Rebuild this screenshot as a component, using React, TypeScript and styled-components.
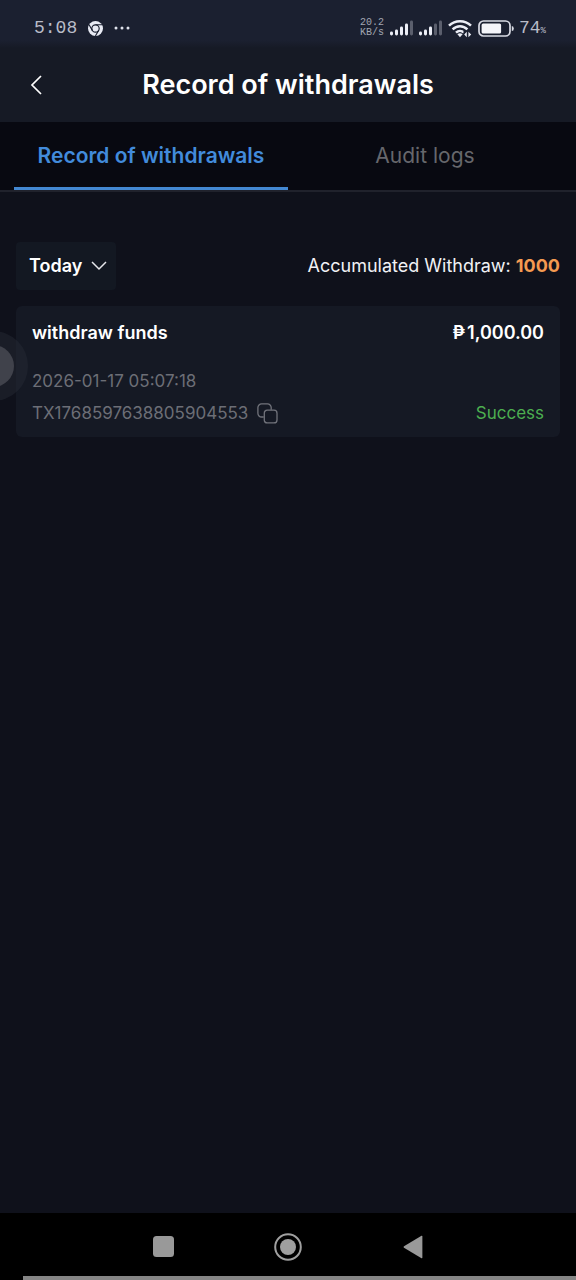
import React from 'react';
import styled, { createGlobalStyle, css } from 'styled-components';

const GlobalStyle = createGlobalStyle`
  *, *::before, *::after { box-sizing: border-box; }
  body {
    margin: 0;
    background: #0f111b;
    color: #ffffff;
    font-family: Inter, "Open Sans", sans-serif;
    font-size: 18px;
    line-height: 24px;
  }
  button { font: inherit; color: inherit; border: 0; padding: 0; background: none; cursor: pointer; }
  h1, h2, p { margin: 0; }
  svg { display: block; flex: none; }
`;

const Screen = styled.div`
  position: relative;
  display: flex;
  flex-direction: column;
  min-height: 100vh;
  overflow: hidden;
`;

const StatusBar = styled.div`
  display: flex;
  align-items: center;
  justify-content: space-between;
  height: 48px;
  padding: 8px 30px 0 34px;
  background: linear-gradient(#1b2030 84%, #161a25);
  color: #d5d8e2;
  font-family: "Liberation Mono", monospace;
`;

const StatusGroup = styled.div<{ $gap: number }>`
  display: flex;
  align-items: center;
  gap: ${({ $gap }) => $gap}px;
`;

const StatusText = styled.span`
  display: flex;
  align-items: baseline;
  font-size: 18px;
  color: #b9bcc8;
`;

const Percent = styled.small`
  font-size: 9px;
  line-height: 9px;
`;

const Speed = styled.span`
  display: grid;
  font-size: 10px;
  line-height: 10px;
  color: #a2a6b2;
`;

const Header = styled.header`
  display: grid;
  grid-template-columns: 48px 1fr 48px;
  align-items: center;
  height: 74px;
  padding: 0 12px;
  background: #161a25;
`;

const BackButton = styled.button`
  display: grid;
  place-items: center;
  height: 48px;
`;

const Title = styled.h1`
  font-size: 27px;
  line-height: 36px;
  font-weight: 600;
  text-align: center;
  white-space: nowrap;
`;

const Tabs = styled.div`
  display: grid;
  grid-template-columns: 1fr 1fr;
  height: 70px;
  padding: 0 14px;
  background: #080911;
  border-bottom: 2px solid #20222c;
`;

const Tab = styled.button<{ $active?: boolean }>`
  height: 68px;
  padding-top: 3px;
  border-bottom: 3px solid transparent;
  font-size: 21px;
  color: #66676c;
  white-space: nowrap;
  ${({ $active }) =>
    $active &&
    css`
      color: #428bdb;
      font-weight: 600;
      border-color: #4388d2;
    `}
`;

const Content = styled.main`
  flex: 1;
  padding: 50px 16px 24px;
`;

const Filters = styled.div`
  display: flex;
  align-items: center;
  justify-content: space-between;
  margin-bottom: 16px;
`;

const PeriodButton = styled.button`
  display: flex;
  align-items: center;
  gap: 9px;
  height: 48px;
  padding: 0 9px 0 13px;
  border-radius: 4px;
  background: #131822;
  font-weight: 600;
`;

const Accumulated = styled.p`
  color: #f1f2f5;
  white-space: nowrap;
`;

const Total = styled.strong`
  color: #f59a51;
  font-weight: 700;
`;

const Card = styled.article`
  padding: 15px 16px 12px;
  border-radius: 6px;
  background: #151924;
`;

const CardRow = styled.div`
  display: flex;
  align-items: center;
  justify-content: space-between;
  height: 24px;
`;

const CardTitle = styled.h2`
  font-size: 18px;
  font-weight: 600;
`;

const Amount = styled.strong`
  display: flex;
  gap: 2px;
  font-weight: 600;
`;

const Details = styled.div`
  display: grid;
  gap: 8px;
  margin-top: 24px;
  font-size: 17px;
  color: #6c6e76;
`;

const Reference = styled.span`
  display: flex;
  align-items: center;
  gap: 9px;
`;

const Status = styled.span`
  color: #4cae50;
`;

const FloatingHandle = styled.button`
  position: absolute;
  top: 331px;
  left: -42px;
  width: 70px;
  height: 70px;
  border-radius: 50%;
  background: rgba(41, 44, 55, 0.45);
  display: grid;
  place-items: center;
  &::after {
    content: '';
    width: 42px;
    height: 42px;
    border-radius: 50%;
    background: #40424b;
  }
`;

const NavBar = styled.nav`
  display: grid;
  grid-template-columns: repeat(3, 125px);
  justify-content: center;
  height: 67px;
  background: #000000;
`;

const NavButton = styled.button`
  display: grid;
  place-items: center;
`;

const BottomLine = styled.div`
  position: absolute;
  right: 0;
  bottom: 0;
  left: 23px;
  height: 4px;
  background: #858585;
`;

const ChromeIcon = () => (
  <svg width="15" height="15" viewBox="0 0 24 24" aria-hidden="true">
    <circle cx="12" cy="12" r="12" fill="#e9ebf4" />
    <circle cx="12" cy="12" r="5.9" stroke="#1b2030" strokeWidth="1.9" fill="none" />
    <g stroke="#1b2030" strokeWidth="1.7" fill="none">
      <path d="M12 6.1H22.500M6.900 15 1.700 5.900M17.100 15 11.800 24" />
    </g>
  </svg>
);

const DotsIcon = () => (
  <svg width="17" height="4" viewBox="0 0 17 4" fill="#e0e3ec" aria-hidden="true">
    <circle cx="2" cy="2" r="1.5" />
    <circle cx="8" cy="2" r="1.5" />
    <circle cx="14" cy="2" r="1.5" />
  </svg>
);

const SignalIcon = ({ bars }: { bars: number }) => (
  <svg width="24" height="16" viewBox="0 0 24 16" aria-hidden="true">
    {[4, 6, 9, 12, 15].map((h, i) => (
      <rect key={h} x={1 + i * 5} y={15.5 - h} width="3" height={h} rx="1.4" fill={i < bars ? '#eceef6' : '#5b5f6d'} />
    ))}
  </svg>
);

const WifiIcon = () => (
  <svg width="26" height="19" viewBox="-1 0 26 19" aria-hidden="true">
    <g fill="none" stroke="#eceef6" strokeWidth="2.5">
      <path d="M1 6.7C7.2.6 16.8.6 23 6.7" />
      <path d="M4.6 10.3c4.3-4.2 10.5-4.2 14.8 0" />
      <path d="M8 13.6c2.4-2.3 5.6-2.3 8 0" />
    </g>
    <path d="M9.4 15.2q2.6-2 5.2 0L12 18.2z" fill="#eceef6" />
    <path d="M15.500 12h9v7h-9z" fill="#1b2030" />
    <path d="M18.800 12.800v5.500l-2.600-2.700M20.400 18.300v-5.500l2.800 2.700" fill="#eceef6" />
  </svg>
);

const BatteryIcon = () => (
  <svg width="36" height="17" viewBox="0 0 36 17" aria-hidden="true">
    <rect x="1" y="1" width="31" height="15" rx="4.5" fill="none" stroke="#d9dbe4" strokeWidth="1.7" />
    <rect x="3.6" y="3.6" width="19.5" height="9.8" rx="1.5" fill="#f4f5f9" />
    <path d="M33.800 6q2 0 2 2.500t-2 2.500z" fill="#d9dbe4" />
  </svg>
);

const CopyIcon = () => (
  <svg width="21" height="21" viewBox="0 0 21 21" fill="none" stroke="#71737b" strokeWidth="1.3" aria-hidden="true">
    <path d="M6.7 14H4.6A3.7 3.7 0 0 1 .9 10.300V4.600A3.700 3.700 0 0 1 4.600.9h5.900a3.700 3.700 0 0 1 3.700 3.700v2.100" />
    <rect x="7.300" y="7.200" width="12.700" height="12.700" rx="3" />
  </svg>
);

export default function App() {
  return (
    <Screen>
      <GlobalStyle />
      <StatusBar>
        <StatusGroup $gap={11}>
          <StatusText>5:08</StatusText>
          <ChromeIcon />
          <DotsIcon />
        </StatusGroup>
        <StatusGroup $gap={5}>
          <Speed>
            <span>20.2</span>
            <span>KB/s</span>
          </Speed>
          <SignalIcon bars={4} />
          <SignalIcon bars={3} />
          <WifiIcon />
          <BatteryIcon />
          <StatusText>
            74<Percent>%</Percent>
          </StatusText>
        </StatusGroup>
      </StatusBar>

      <Header>
        <BackButton aria-label="Back">
          <svg width="12" height="20" viewBox="0 0 12 20" fill="none" stroke="#ffffff" strokeWidth="1.7">
            <path d="M11 1 2 10l9 9" />
          </svg>
        </BackButton>
        <Title>Record of withdrawals</Title>
      </Header>

      <Tabs role="tablist">
        <Tab role="tab" aria-selected="true" $active>
          Record of withdrawals
        </Tab>
        <Tab role="tab" aria-selected="false">
          Audit logs
        </Tab>
      </Tabs>

      <Content>
        <Filters>
          <PeriodButton aria-haspopup="listbox">
            Today
            <svg width="16" height="10" viewBox="0 0 16 10" fill="none" stroke="#e6e7eb" strokeWidth="1.5" aria-hidden="true">
              <path d="m1 1 7 7 7-7" />
            </svg>
          </PeriodButton>
          <Accumulated>
            Accumulated Withdraw: <Total>1000</Total>
          </Accumulated>
        </Filters>

        <Card>
          <CardRow>
            <CardTitle>withdraw funds</CardTitle>
            <Amount>
              <span>₱</span>
              <span>1,000.00</span>
            </Amount>
          </CardRow>
          <Details>
            <time dateTime="2026-01-17T05:07:18">2026-01-17 05:07:18</time>
            <CardRow>
              <Reference>
                TX1768597638805904553
                <button aria-label="Copy transaction number">
                  <CopyIcon />
                </button>
              </Reference>
              <Status>Success</Status>
            </CardRow>
          </Details>
        </Card>
      </Content>

      <NavBar aria-label="System navigation">
        <NavButton aria-label="Recent apps">
          <svg width="21" height="21" viewBox="0 0 21 21">
            <rect width="21" height="21" rx="3.500" fill="#999999" />
          </svg>
        </NavButton>
        <NavButton aria-label="Home">
          <svg width="28" height="28" viewBox="0 0 28 28">
            <circle cx="14" cy="14" r="12.800" fill="none" stroke="#a0a0a0" strokeWidth="2" />
            <circle cx="14" cy="14" r="8" fill="#a0a0a0" />
          </svg>
        </NavButton>
        <NavButton aria-label="Back to previous screen">
          <svg width="20" height="24" viewBox="0 0 20 24">
            <path d="M18.500.8 1 11.200q-1 .8 0 1.600l17.500 10.400q.9.400.9-.7v-21q0-1.100-.9-.7z" fill="#999999" />
          </svg>
        </NavButton>
      </NavBar>
      <BottomLine />
      <FloatingHandle aria-label="Open floating shortcuts" />
    </Screen>
  );
}
